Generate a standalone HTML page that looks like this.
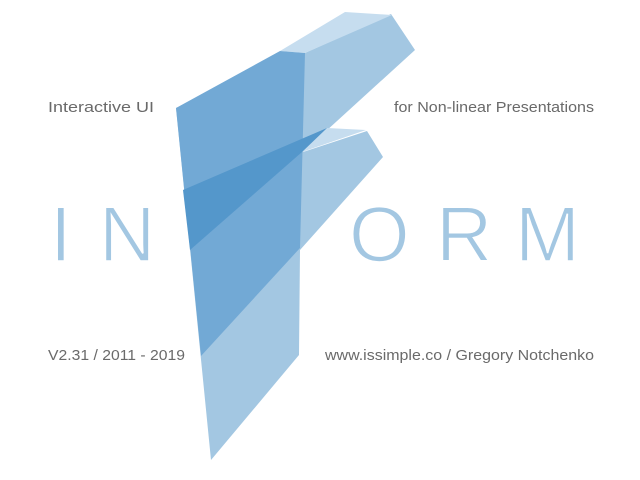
<!DOCTYPE html>
<html><head><meta charset="utf-8"><style>
html,body{margin:0;padding:0;background:#fff;width:640px;height:480px;overflow:hidden}
svg{position:absolute;left:0;top:0}
</style></head><body>
<svg width="640" height="480" viewBox="0 0 640 480">
  <g font-family="Liberation Sans, sans-serif" font-size="78" fill="#a3c7e2" stroke="#fff" stroke-width="1.6">
    <text x="50" y="261">I</text>
    <text x="99" y="261">N</text>
    <text x="349" y="261">O</text>
    <text x="436" y="261">R</text>
    <text x="515" y="261">M</text>
  </g>
  <polygon points="305,53 391,14 415,50 303,152 367,131 383,157 300,250 299,355 211,460 176,108" fill="#a3c7e2"/>
  <polygon points="280,51 345,12 392,15 305,53" fill="#c6ddef"/>
  <polygon points="302,152 327,128 366,130" fill="#c6ddef"/>
  <polygon points="176,108 280,51 305,53 300,248 201,356" fill="#72a9d5"/>
  <polygon points="183,190 327,128 302,152 190,250" fill="#5497cb"/>
  <g font-family="Liberation Sans, sans-serif" font-size="14.5" fill="#6a6a6a">
    <text x="48" y="112" textLength="106" lengthAdjust="spacingAndGlyphs">Interactive UI</text>
    <text x="394" y="112" textLength="200" lengthAdjust="spacingAndGlyphs">for Non-linear Presentations</text>
    <text x="48" y="360" textLength="137" lengthAdjust="spacingAndGlyphs">V2.31 / 2011 - 2019</text>
    <text x="325" y="360" textLength="269" lengthAdjust="spacingAndGlyphs">www.issimple.co / Gregory Notchenko</text>
  </g>
</svg>
</body></html>
